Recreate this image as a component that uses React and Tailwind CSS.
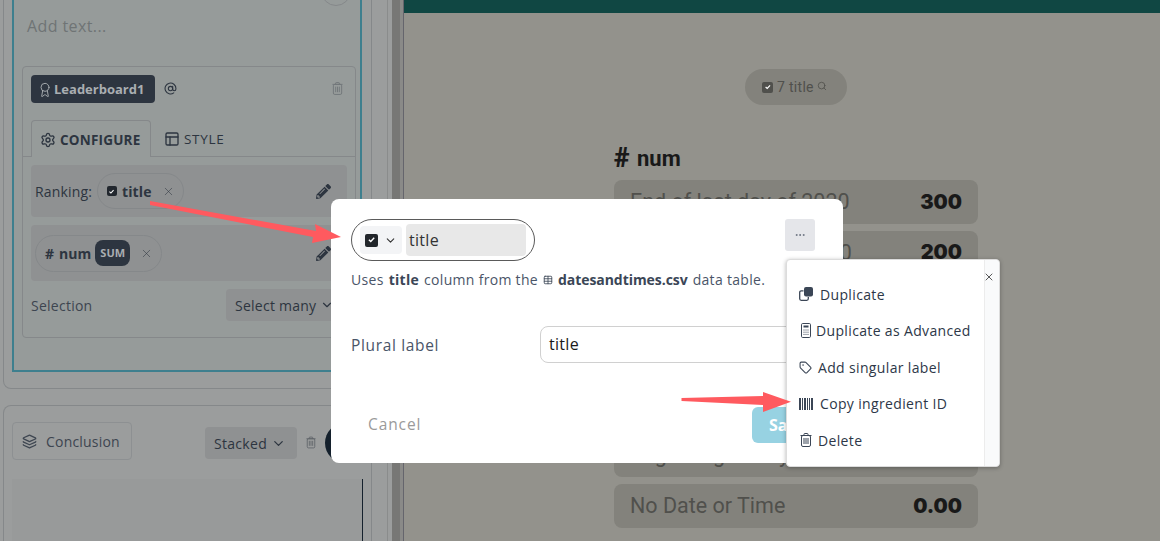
import React from "react";
import { Settings, Layout, X, Award, AtSign, ChevronDown, Layers, Search, Tag, Ellipsis, Table } from "lucide-react";
import { FaPencilAlt } from "react-icons/fa";

const Check = ({ cls }) => (
  <span className={`inline-flex items-center justify-center rounded-[2px] ${cls}`}>
    <svg viewBox="0 0 12 12" className="w-[70%] h-[70%]" fill="none" stroke="#fff" strokeWidth="1.8"><path d="M2.5 6.2 5 8.6 9.5 3.6" /></svg>
  </span>
);

const Row = ({ label, value }) => (
  <div className="flex items-center justify-between h-[43.67px] rounded-lg bg-[#83827c] pl-4 pr-4 shrink-0">
    <span className="font-['Roboto',sans-serif] text-[21.5px] text-[#50504c] leading-none">{label}</span>
    <span className="font-['Inter',sans-serif] font-black text-[20px] text-[#191919] leading-none">{value}</span>
  </div>
);

const Barcode = () => (
  <svg viewBox="0 0 14 12" className="w-[14px] h-[12px]" fill="#3b4656">
    <rect x="0" width="2" height="12" /><rect x="3" width="1" height="12" /><rect x="5" width="2" height="12" /><rect x="8" width="1" height="12" /><rect x="10" width="1" height="12" /><rect x="12" width="2" height="12" />
  </svg>
);

const DuplicateIcon = () => (
  <svg viewBox="0 0 14 14" className="w-[14px] h-[14px]">
    <rect x="5" y="0" width="9" height="9.5" rx="2" fill="#3b4656" />
    <path d="M4.5 3.8H2.2A1.5 1.5 0 0 0 .7 5.3v6.5a1.5 1.5 0 0 0 1.5 1.5h5.6a1.5 1.5 0 0 0 1.5-1.5V10" fill="none" stroke="#3b4656" strokeWidth="1.3" />
  </svg>
);

const CalcIcon = () => (
  <svg viewBox="0 0 10 15" className="w-[10px] h-[15px]" fill="none" stroke="#3b4656">
    <rect x=".5" y=".5" width="9" height="14" rx="1.2" />
    <rect x="2.5" y="2.5" width="5" height="2" fill="#3b4656" stroke="none" />
    <path d="M2.5 7h1M4.5 7h1M6.5 7h1M2.5 9.2h1M4.5 9.2h1M6.5 9.2h1M2.5 11.4h1M4.5 11.4h1M6.5 11.4h1" />
  </svg>
);

const TrashIcon = ({ cls, color }) => (
  <svg viewBox="0 0 12 14" className={cls} fill="none" stroke={color} strokeWidth="1">
    <path d="M.5 2.5h11M4 2.5V1.2A.7.7 0 0 1 4.7.5h2.6a.7.7 0 0 1 .7.7v1.3" />
    <rect x="1.5" y="2.5" width="9" height="11" rx="1.5" />
    <path d="M4 5v6M6 5v6M8 5v6" />
  </svg>
);

const MenuItem = ({ icon, label, gap }) => (
  <div className={`flex items-center h-[36.5px] pl-[11px] text-[14px] tracking-[0.35px] text-[#2d3748] ${gap}`}>
    <span className="flex justify-center w-[15px] shrink-0">{icon}</span>
    <span>{label}</span>
  </div>
);

export default function App() {
  return (
    <div className="relative w-[1160px] h-[541px] overflow-hidden flex bg-[#93928c] font-['Open_Sans',sans-serif]">
      {/* left column */}
      <div className="w-[392px] h-full shrink-0 bg-[#9b9d9d] flex">
        <div className="w-[372px] shrink-0 pl-[3px] flex flex-col h-full">
          {/* top panel */}
          <div className="w-[369px] h-[389px] shrink-0 border border-t-0 border-[#85888a] rounded-b-lg pl-[8px] pr-[9px]">
            <div className="relative h-[372px] border-2 border-t-0 border-[#3e7f8e] bg-[#969b9a] pl-[8px] pr-[4px] overflow-hidden">
              <div className="absolute right-[9px] -top-[24px] w-[30px] h-[30px] rounded-full border border-[#85888a]" />
              <div className="pt-[14px] pl-[5px] h-[66px] text-[16px] tracking-[0.4px] text-[#6f7475]">Add text...</div>
              <div className="h-[272px] border border-[#85888a] rounded-[4px]">
                <div className="flex items-start h-[53px] pl-[8px] pr-[12px] pt-[8px]">
                  <div className="flex items-center gap-[1px] h-[28px] w-[124px] rounded-[4px] bg-[#2d3540] pl-[6px] pt-[1px] text-[13px] font-bold text-[#a9aeb1]">
                    <Award size={16} strokeWidth={1.4} /><span>Leaderboard1</span>
                  </div>
                  <AtSign size={13} className="ml-[9px] mt-[7px] text-[#2d3540]" />
                  <TrashIcon cls="w-[11px] h-[13px] ml-auto mt-[7px]" color="#71767a" />
                </div>
                <div className="flex h-[37px] border-b border-[#85888a] pl-[8px]">
                  <div className="flex items-center gap-[4px] w-[120px] h-[37px] pl-[8px] pt-[2px] border border-b-0 border-[#85888a] bg-[#969b9a] rounded-t-[4px] text-[13.5px] font-bold tracking-[0.2px] text-[#2d3540]">
                    <Settings size={16} /><span>CONFIGURE</span>
                  </div>
                  <div className="flex items-center gap-[4px] pl-[13px] pt-[2px] text-[13.5px] tracking-[0.7px] text-[#2d3540]">
                    <Layout size={16} /><span>STYLE</span>
                  </div>
                </div>
                <div className="px-[8px] pt-[8px] flex flex-col gap-[8px]">
                  <div className="flex items-center h-[52px] rounded-[4px] bg-[#8f9192] pl-[4px] pr-[16px] text-[14px] tracking-[0.15px] text-[#2d3540]">
                    <span>Ranking:</span>
                    <div className="flex items-center h-[36px] w-[87px] ml-[5px] rounded-full border border-[#85888a] pl-[9px] font-bold text-[14px]">
                      <Check cls="w-[10px] h-[10px] bg-[#22272e]" />
                      <span className="ml-[5px]">title</span>
                      <X size={13} strokeWidth={1} className="ml-[10px]" />
                    </div>
                    <FaPencilAlt size={15} className="ml-auto" />
                  </div>
                  <div className="flex items-center h-[56px] rounded-[4px] bg-[#8f9192] pl-[4px] pr-[16px] text-[14px] text-[#2d3540]">
                    <div className="flex items-center h-[37px] w-[127px] rounded-full border border-[#85888a] pl-[9px] font-bold">
                      <span>#</span><span className="ml-[5px]">num</span>
                      <span className="ml-[4px] flex items-center justify-center w-[35px] h-[26px] rounded-[8px] bg-[#2d3540] text-[11px] text-[#a9aeb1]">SUM</span>
                      <X size={13} strokeWidth={1} className="ml-[10px]" />
                    </div>
                    <FaPencilAlt size={15} className="ml-auto" />
                  </div>
                </div>
                <div className="flex items-center h-[32px] mt-[8px] pl-[8px] pr-[8px] text-[14px] tracking-[0.25px] text-[#3d4550]">
                  <span>Selection</span>
                  <div className="ml-auto flex items-center gap-[4px] h-[32px] w-[121px] rounded-[4px] bg-[#8f9192] pl-[9px] shrink-0 text-[#2d3540]">
                    <span>Select many</span><ChevronDown size={14} />
                  </div>
                </div>
              </div>
            </div>
          </div>
          {/* conclusion panel */}
          <div className="w-[369px] flex-1 mt-[16px] border border-b-0 border-[#85888a] rounded-t-lg pl-[8px] pr-[9px] pt-[16px]">
            <div className="flex items-start">
              <div className="flex items-center gap-[9px] w-[120px] h-[38px] shrink-0 pl-[9px] border border-[#8d9092] rounded-[4px] text-[14px] text-[#3d4550] tracking-[0.2px]">
                <Layers size={15} /><span>Conclusion</span>
              </div>
              <div className="flex items-center gap-[4px] ml-[73px] mt-[5px] w-[92px] h-[32px] shrink-0 pl-[9px] rounded-[4px] bg-[#8f9192] text-[14px] text-[#2d3540] tracking-[0.3px]">
                <span>Stacked</span><ChevronDown size={15} />
              </div>
              <TrashIcon cls="w-[10px] h-[13px] shrink-0 ml-[9px] mt-[14px]" color="#5e6367" />
              <div className="ml-[9px] mt-[1px] w-[40px] h-[40px] rounded-full bg-[#14202c] shrink-0" />
            </div>
            <div className="mt-[16px] h-[80px] w-[351px] bg-[#989a9a] border-r border-[#14202c]" />
          </div>
        </div>
        <div className="w-[16px] shrink-0 border-r border-[#8a8c8c]" />
      </div>
      {/* divider */}
      <div className="w-[12px] h-full shrink-0 flex">
        <div className="w-[8px] bg-[#777775]" />
        <div className="flex-1 bg-[#8a8a88] border-r border-[#65656c]" />
      </div>
      {/* right */}
      <div className="flex-1 h-full flex flex-col">
        <div className="h-[13px] w-full bg-[#104743] shrink-0" />
        <div className="pl-[210px] w-[575px] flex flex-col">
          <div className="mt-[56px] ml-[131px] flex items-center h-[36px] w-[102px] rounded-full bg-[#83827c] pl-[17px] font-['Roboto',sans-serif] text-[14px] text-[#50504c] tracking-[0.3px]">
            <Check cls="w-[11px] h-[11px] bg-[#50504c]" />
            <span className="ml-[4px]">7 title</span>
            <Search size={10} className="ml-[3px] mb-[2px]" />
          </div>
          <div className="flex items-center mt-[36px] h-[34px] text-[#191919] font-['Roboto',sans-serif] font-bold text-[22px]">
            <span className="text-[27px] font-black w-[23px]">#</span><span>num</span>
          </div>
          <div className="mt-[5px] flex flex-col gap-[7px] w-[364px]">
            <Row label="End of last day of 2020" value="300" />
            <Row label="End of first day of 2020" value="200" />
            <Row label="Middle of 2020" value="100" />
            <Row label="Noon" value="50" />
            <Row label="Beginning of 2019" value="2.00" />
            <Row label="Beginning of day" value="1.00" />
            <Row label="No Date or Time" value="0.00" />
          </div>
        </div>
      </div>

      {/* modal */}
      <div className="absolute left-[331px] top-[199px] w-[512px] h-[264px] rounded-lg bg-white font-['Open_Sans',sans-serif]">
        <div className="absolute left-[20px] top-[20px] flex items-center w-[184px] h-[42px] rounded-full border border-[#5a5a5a] pl-[8px]">
          <div className="flex items-center w-[42px] h-[28px] rounded-[4px] bg-[#f3f4f6] pl-[5px]">
            <Check cls="w-[13px] h-[13px] bg-[#22262b]" />
            <ChevronDown size={13} className="ml-[6px] text-[#333]" />
          </div>
          <div className="flex items-center w-[120px] h-[32px] ml-[4px] rounded-[4px] bg-[#e8e8e8] pl-[3px] text-[16px] text-[#333] tracking-[0.3px]">title</div>
        </div>
        <div className="absolute left-[20px] top-[70px] flex items-center text-[14px] tracking-[0.3px] text-[#4a5568] whitespace-nowrap">
          Uses<b className="mx-[5px] text-[#3b4656]">title</b>column from the
          <Table size={10} className="mx-[5px] text-[#3b4656]" />
          <b className="text-[#3b4656] tracking-[-0.05px]">datesandtimes.csv</b>
          <span className="ml-[5px]">data table.</span>
        </div>
        <div className="absolute left-[20px] top-[135px] text-[15.5px] tracking-[0.65px] text-[#4a5568]">Plural label</div>
        <div className="absolute left-[209px] top-[127px] w-[290px] h-[37px] rounded-lg border border-[#d0d0d0] flex items-center pl-[8px] pb-[1px] text-[16px] text-[#1a1a1a] tracking-[0.3px]">title</div>
        <div className="absolute left-[37px] top-[214px] text-[15.5px] tracking-[0.9px] text-[#9a9a9a]">Cancel</div>
        <div className="absolute left-[421px] top-[208px] w-[60px] h-[36px] rounded-[6px] bg-[#97d2e2] flex items-center pl-[17px] text-[16px] font-bold text-white">Save</div>
        <div className="absolute left-[454px] top-[20px] w-[30px] h-[32px] rounded-[3px] bg-[#e5e6ea] flex items-center justify-center">
          <Ellipsis size={12} className="text-[#6b7280]" />
        </div>
      </div>

      {/* dropdown */}
      <div className="absolute left-[786px] top-[259px] w-[214px] h-[208px] rounded-[4px] bg-white border border-[#dcdcdc] shadow-[0_1px_4px_rgba(0,0,0,0.3)] flex">
        <div className="flex-1 pt-[16px]">
          <MenuItem icon={<DuplicateIcon />} label="Duplicate" gap="gap-[7px]" />
          <MenuItem icon={<CalcIcon />} label="Duplicate as Advanced" gap="gap-[3px]" />
          <MenuItem icon={<Tag size={13} className="text-[#3b4656]" />} label="Add singular label" gap="gap-[5px]" />
          <MenuItem icon={<Barcode />} label="Copy ingredient ID" gap="gap-[7px]" />
          <MenuItem icon={<TrashIcon cls="w-[12px] h-[14px]" color="#3b4656" />} label="Delete" gap="gap-[5px]" />
        </div>
        <div className="w-[15px] h-full bg-[#f9fafb] border-l border-[#ececec] rounded-r-[4px]" />
        <X size={12} strokeWidth={1.5} className="absolute right-[4px] top-[11px] text-[#222]" />
      </div>

      {/* annotation arrows */}
      <svg className="absolute inset-0 pointer-events-none" width="1160" height="541" viewBox="0 0 1160 541">
        <path d="M150 201 L316 231 L315 224 L341 237 L312 243 L313 237 L150 205 Z" fill="#ff5a5f" />
        <path d="M681.5 398 L763 396 L763 392 L791 401.7 L763 412 L763 405 L681.5 401 Z" fill="#ff5a5f" />
      </svg>
    </div>
  );
}
